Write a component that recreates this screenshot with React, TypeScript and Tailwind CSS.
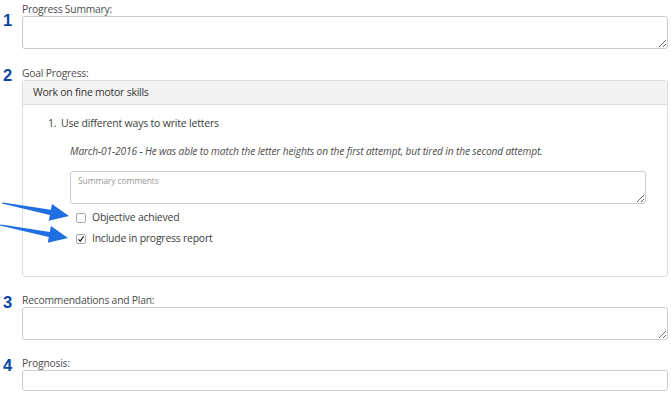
import React from "react";

const font = { fontFamily: '"Open Sans", "Liberation Sans", sans-serif' };

function Num({ n, top }: { n: number; top: string }) {
  return (
    <div
      className={`w-[22px] shrink-0 pl-[3px] text-[16.5px] font-bold leading-none text-[#0a45a5] [font-family:'Liberation_Sans',Arial,sans-serif] ${top}`}
    >
      {n}
    </div>
  );
}

function Label({ children }: { children: React.ReactNode }) {
  return (
    <div className="text-[10.3px] tracking-[-0.2px] leading-[13px] text-[#4d4d4d] h-[13px]">{children}</div>
  );
}

function Box({ checked }: { checked?: boolean }) {
  return (
    <span className="w-[10px] h-[10px] border border-[#aaa] rounded-[2px] bg-white flex items-center justify-center shrink-0">
      {checked && (
        <svg width="8" height="8" viewBox="0 0 8 8">
          <path d="M1.5 4.4 L3.2 6.2 L6.6 1.4" fill="none" stroke="#222" strokeWidth="1.2" />
        </svg>
      )}
    </span>
  );
}

function Arrow({ x1, y1, x2, y2 }: { x1: number; y1: number; x2: number; y2: number }) {
  const dx = x2 - x1, dy = y2 - y1;
  const len = Math.hypot(dx, dy);
  const ux = dx / len, uy = dy / len;
  const px = -uy, py = ux;
  const bx = x2 - ux * 19, by = y2 - uy * 19;
  const pts = [
    [x1 + px * 0.6, y1 + py * 0.6],
    [bx + px * 2.6, by + py * 2.6],
    [bx + px * 8.5, by + py * 8.5],
    [x2, y2],
    [bx - px * 8.5, by - py * 8.5],
    [bx - px * 2.6, by - py * 2.6],
    [x1 - px * 0.6, y1 - py * 0.6],
  ];
  return <polygon points={pts.map((p) => p.join(",")).join(" ")} fill="#1f6fe3" />;
}

export default function App() {
  return (
    <div className="relative w-[671px] h-[398px] bg-white overflow-hidden" style={font}>
      <div className="pt-[3px] pr-[3px]">
        {/* 1 */}
        <div className="flex">
          <Num n={1} top="pt-[9px]" />
          <div className="flex-1">
            <Label>Progress Summary:</Label>
            <textarea className="block w-full h-[33px] border border-[#ccc] rounded-[3px] resize-y outline-none" />
          </div>
        </div>

        {/* 2 */}
        <div className="flex mt-[18px]">
          <Num n={2} top="pt-[0px]" />
          <div className="flex-1">
            <Label>Goal Progress:</Label>
            <div className="border border-[#ddd] rounded-[3px] h-[197px]">
              <div className="h-[24px] bg-[#f3f3f3] border-b border-[#ddd] pl-[10px] flex items-center text-[10.5px] tracking-[-0.25px] text-[#333]">
                Work on fine motor skills
              </div>
              <div className="pt-[9px] text-[#3d3d3d]">
                <div className="flex pl-[25px] text-[10.5px] tracking-[-0.2px] leading-[18px]">
                  <span className="w-[13px]">1.</span>
                  <span>Use different ways to write letters</span>
                </div>
                <div className="pl-[47px] pr-[21px] mt-[11px]">
                  <div className="italic text-[10.2px] tracking-[-0.15px] leading-[16px] text-[#4d4d4d]">
                    March-01-2016 - He was able to match the letter heights on the first attempt, but tired in the second attempt.
                  </div>
                  <textarea
                    placeholder="Summary comments"
                    className="block mt-[12px] w-full h-[33px] border border-[#ccc] rounded-[3px] px-[7px] py-[3px] text-[8.5px] tracking-[-0.1px] placeholder:text-[#999] resize-y outline-none"
                  />
                  <div className="flex flex-col mt-[4px] text-[10.4px] tracking-[-0.2px] text-[#3d3d3d]">
                    <label className="flex items-center gap-[6px] h-[20px] pl-[6px]">
                      <Box />
                      <span>Objective achieved</span>
                    </label>
                    <label className="flex items-center gap-[6px] h-[21px] pl-[6px]">
                      <Box checked />
                      <span>Include in progress report</span>
                    </label>
                  </div>
                </div>
              </div>
            </div>
          </div>
        </div>

        {/* 3 */}
        <div className="flex mt-[17px]">
          <Num n={3} top="pt-[0px]" />
          <div className="flex-1">
            <Label>Recommendations and Plan:</Label>
            <textarea className="block w-full h-[33px] border border-[#ccc] rounded-[3px] resize-y outline-none" />
          </div>
        </div>

        {/* 4 */}
        <div className="flex mt-[17px]">
          <Num n={4} top="pt-[0px]" />
          <div className="flex-1">
            <Label>Prognosis:</Label>
            <input className="block w-full h-[21px] border border-[#ccc] rounded-[3px] outline-none" />
          </div>
        </div>
      </div>

      <svg className="absolute left-0 top-0 pointer-events-none" width="671" height="398">
        <Arrow x1={2} y1={203} x2={69} y2={216} />
        <Arrow x1={0} y1={225} x2={68} y2={238} />
      </svg>
    </div>
  );
}
